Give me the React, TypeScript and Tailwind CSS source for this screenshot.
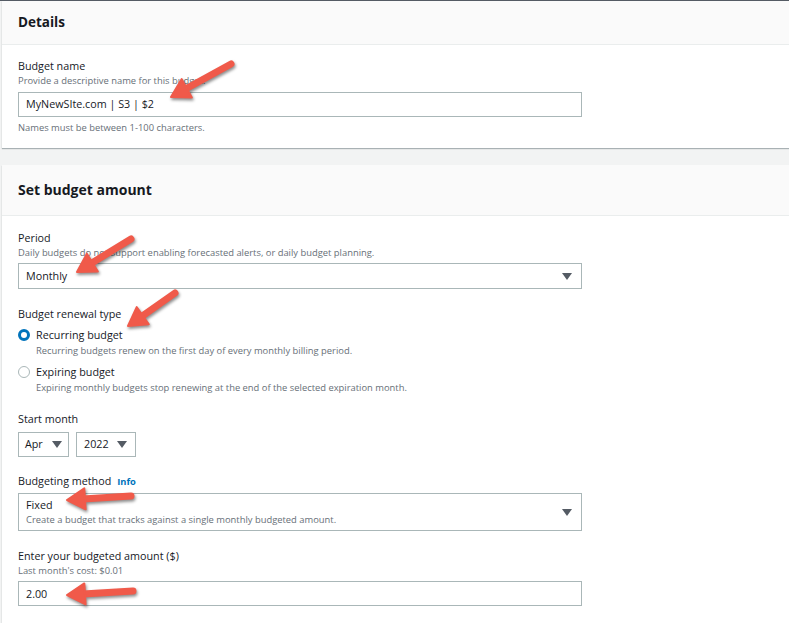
import React from 'react';

function Caret() {
  return (
    <svg width="10" height="7" viewBox="0 0 10 7" className="shrink-0">
      <path d="M0 0 H10 L5 7 Z" fill="#545b64" />
    </svg>);
}

function Radio({ checked }: { checked?: boolean }) {
  return checked ?
  <span className="mt-[2px] w-[12px] h-[12px] rounded-full border-[3.5px] border-[#0073bb] bg-white shrink-0" /> :
  <span className="mt-[2px] w-[12px] h-[12px] rounded-full border border-[#aab7b8] bg-white shrink-0" />;
}

function Arrow({ x1, y1, x2, y2 }: { x1: number; y1: number; x2: number; y2: number }) {
  const dx = x2 - x1;
  const dy = y2 - y1;
  const len = Math.sqrt(dx * dx + dy * dy);
  const ux = dx / len;
  const uy = dy / len;
  const head = 18;
  const bx = x2 - ux * head;
  const by = y2 - uy * head;
  const px = -uy * 10.5;
  const py = ux * 10.5;
  return (
    <g>
      <line x1={x1} y1={y1} x2={bx + ux * 2} y2={by + uy * 2} stroke="#f05a4a" strokeWidth="7" strokeLinecap="round" />
      <path
        d={`M${x2} ${y2} L${bx + px} ${by + py} L${bx - px} ${by - py} Z`}
        fill="#f05a4a"
        stroke="#f05a4a"
        strokeWidth="2"
        strokeLinejoin="round" />
    </g>);
}

export default function App() {
  return (
    <div className="relative w-[789px] h-[623px] overflow-hidden bg-[#f2f3f3] border-t border-[#545b64] pl-[2px] text-[#16191f]" style={{ fontFamily: '"Open Sans", "Noto Sans", sans-serif' }}>
      <section className="bg-white shadow-[0_1px_1px_0_rgba(0,28,36,0.3)]">
        <div className="h-[44px] bg-[#fafafa] border-b border-[#eaeded] flex items-center pl-[16px]">
          <h2 className="text-[13.5px] font-bold leading-none">Details</h2>
        </div>
        <div className="pl-[16px] pt-[13px] pb-[13px]">
          <div className="text-[10.75px] leading-[16px]">Budget name</div>
          <div className="text-[9.4px] leading-[14px] text-[#687078]">Provide a descriptive name for this budget.</div>
          <div className="mt-[4px] w-[564px] h-[25px] border border-[#aab7b8] flex items-center px-[7px] text-[10.75px]">MyNewSIte.com | S3 | $2</div>
          <div className="mt-[4px] text-[9.4px] leading-[14px] text-[#687078]">Names must be between 1-100 characters.</div>
        </div>
      </section>

      <section className="mt-[17px] bg-white h-[460px] shadow-[0_1px_1px_0_rgba(0,28,36,0.3)]">
        <div className="h-[51px] bg-[#fafafa] border-b border-[#eaeded] flex items-center pl-[16px]">
          <h2 className="text-[14px] font-bold leading-none">Set budget amount</h2>
        </div>
        <div className="pl-[16px] pt-[14px]">
          <div className="text-[10.75px] leading-[16px]">Period</div>
          <div className="text-[9.4px] leading-[14px] text-[#687078]">Daily budgets do not support enabling forecasted alerts, or daily budget planning.</div>
          <div className="mt-[3px] w-[564px] h-[26px] border border-[#aab7b8] flex items-center justify-between pl-[7px] pr-[9px] text-[10.75px]">
            <span>Monthly</span>
            <Caret />
          </div>

          <div className="mt-[17px] text-[10.75px] leading-[16px]">Budget renewal type</div>
          <div className="mt-[5px] flex gap-[6px]">
            <Radio checked />
            <div>
              <div className="text-[10.75px] leading-[16px]">Recurring budget</div>
              <div className="mt-[1px] text-[9.4px] leading-[14px] text-[#687078]">Recurring budgets renew on the first day of every monthly billing period.</div>
            </div>
          </div>
          <div className="mt-[6px] flex gap-[6px]">
            <Radio />
            <div>
              <div className="text-[10.75px] leading-[16px]">Expiring budget</div>
              <div className="mt-[1px] text-[9.4px] leading-[14px] text-[#687078]">Expiring monthly budgets stop renewing at the end of the selected expiration month.</div>
            </div>
          </div>

          <div className="mt-[16px] text-[10.75px] leading-[16px]">Start month</div>
          <div className="mt-[5px] flex gap-[7px]">
            <div className="w-[51px] h-[25px] border border-[#aab7b8] flex items-center justify-between pl-[6px] pr-[6px] text-[10.75px]">
              <span>Apr</span>
              <Caret />
            </div>
            <div className="w-[60px] h-[25px] border border-[#aab7b8] flex items-center justify-between pl-[7px] pr-[8px] text-[10.75px]">
              <span>2022</span>
              <Caret />
            </div>
          </div>

          <div className="mt-[16px] flex items-baseline gap-[6px]">
            <span className="text-[10.75px] leading-[16px]">Budgeting method</span>
            <span className="text-[9.4px] font-bold text-[#0073bb]">Info</span>
          </div>
          <div className="mt-[4px] w-[564px] h-[38px] border border-[#aab7b8] flex items-center justify-between pl-[7px] pr-[9px]">
            <div>
              <div className="text-[10.75px] leading-[16px]">Fixed</div>
              <div className="text-[9.4px] leading-[14px] text-[#687078]">Create a budget that tracks against a single monthly budgeted amount.</div>
            </div>
            <Caret />
          </div>

          <div className="mt-[17px] text-[10.75px] leading-[16px]">Enter your budgeted amount ($)</div>
          <div className="text-[9.4px] leading-[14px] text-[#687078]">Last month's cost: $0.01</div>
          <div className="mt-[3px] w-[564px] h-[25px] border border-[#aab7b8] flex items-center px-[7px] text-[10.75px]">2.00</div>
        </div>
      </section>

      <svg className="absolute left-0 top-0 pointer-events-none" width="789" height="623" style={{ filter: 'drop-shadow(1px 2px 1.5px rgba(0,0,0,0.45))' }}>
        <Arrow x1={231} y1={63} x2={171} y2={96} />
        <Arrow x1={131} y1={238} x2={77} y2={271} />
        <Arrow x1={175} y1={292} x2={128} y2={325} />
        <Arrow x1={131} y1={495} x2={67} y2={499} />
        <Arrow x1={133} y1={590} x2={67} y2={594} />
      </svg>
    </div>);
}
